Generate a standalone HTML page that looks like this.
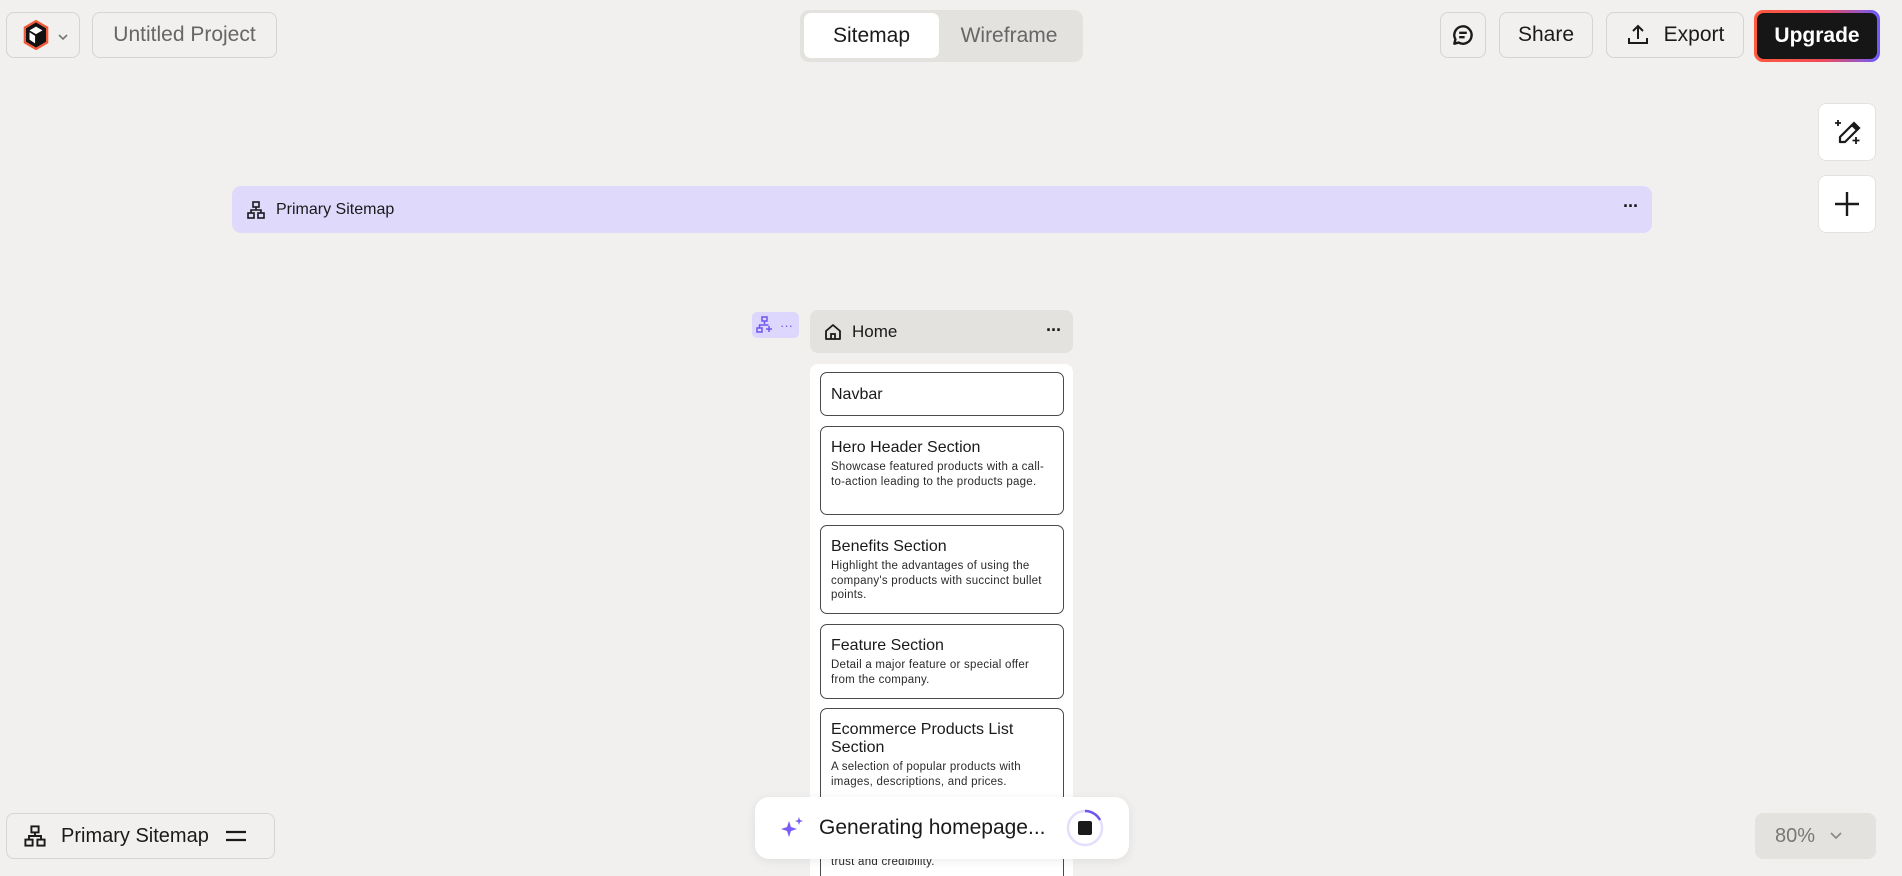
<!DOCTYPE html>
<html style="height:876px;overflow:hidden"><head><meta charset="utf-8"><style>
*{box-sizing:border-box;margin:0;padding:0}
body{width:1902px;height:876px;background:#f1f0ee;font-family:"Liberation Sans",sans-serif;color:#1a1a1a;position:relative;overflow:hidden}
.a{position:absolute}
.btn{position:absolute;border:1px solid #d6d4d0;border-radius:8px;display:flex;align-items:center;justify-content:center;font-size:21px;color:#1a1a1a}
.card{position:absolute;left:820px;width:244px;background:#fff;border:1.3px solid #4a4a4a;border-radius:7px;padding:10px 10px 0 10px}
.card h4{font-weight:normal;font-size:16px;line-height:18px;margin-top:1px}
.card p{font-size:11.5px;letter-spacing:0.25px;line-height:14.5px;color:#2a2a2a;margin-top:3px}
</style></head><body>
<div class="btn" style="left:6px;top:12px;width:74px;height:46px">
<svg width="26" height="30" viewBox="0 0 28 32" style="margin-left:-14px"><polygon points="14,1 26,8 26,24 14,31 2,24 2,8" fill="#111" stroke="#f15a3b" stroke-width="2.5"/><polygon points="14,7 21,11 14,15 7,11" fill="#fff"/><polygon points="7,13 13,17 13,25 7,21" fill="#fff"/></svg>
<svg width="12" height="8" viewBox="0 0 12 8" style="position:absolute;right:10px;top:20px"><path d="M2 2l4 4 4-4" stroke="#777" stroke-width="1.6" fill="none"/></svg>
</div>
<div class="btn" style="left:92px;top:12px;width:185px;height:46px;color:#666">Untitled Project</div>
<div class="a" style="left:800px;top:10px;width:283px;height:52px;background:#e3e2de;border-radius:9px"></div>
<div class="a" style="left:804px;top:13px;width:135px;height:45px;background:#fff;border-radius:7px;display:flex;align-items:center;justify-content:center;font-size:21px">Sitemap</div>
<div class="a" style="left:939px;top:13px;width:140px;height:45px;display:flex;align-items:center;justify-content:center;font-size:21px;color:#666">Wireframe</div>
<div class="btn" style="left:1440px;top:12px;width:46px;height:46px"><svg width="26" height="26" viewBox="0 0 24 24" fill="none" stroke="#1a1a1a" stroke-width="2.2"><path d="M4 20l1-4a8 8 0 1 1 3 3z" stroke-linejoin="round"/><path d="M8.5 10h7M8.5 14h5"/></svg></div>
<div class="btn" style="left:1499px;top:12px;width:94px;height:46px">Share</div>
<div class="btn" style="left:1606px;top:12px;width:138px;height:46px"><svg width="24" height="24" viewBox="0 0 24 24" fill="none" stroke="#1a1a1a" stroke-width="2" style="margin-right:14px"><path d="M12 16V3M7 8l5-5 5 5M3 15v5h18v-5"/></svg>Export</div>
<div class="a" style="left:1754px;top:10px;width:126px;height:52px;border-radius:9px;background:linear-gradient(90deg,#ff5a3c,#f04a5a 55%,#6a5cff)"></div>
<div class="a" style="left:1757px;top:13px;width:120px;height:46px;border-radius:7px;background:#161616;color:#fff;font-size:21px;font-weight:bold;display:flex;align-items:center;justify-content:center">Upgrade</div>
<div class="btn" style="left:1818px;top:103px;width:58px;height:58px;background:#fff;border-color:#e4e2de"><svg width="32" height="32" viewBox="0 0 32 32" fill="none" stroke="#1a1a1a" stroke-width="2.2"><path d="M9 26l0-5 12-12 5 5-12 12z" stroke-linejoin="round"/><path d="M21 9l2-2 5 5-2 2" fill="#1a1a1a"/><path d="M7 4v6M4 7h6M25 21v7M21.5 24.5h7" stroke-width="1.8"/></svg></div>
<div class="btn" style="left:1818px;top:175px;width:58px;height:58px;background:#fff;border-color:#e4e2de"><svg width="28" height="28" viewBox="0 0 28 28" stroke="#1a1a1a" stroke-width="2.4"><path d="M14 2v24M2 14h24"/></svg></div>
<div class="a" style="left:232px;top:186px;width:1420px;height:47px;background:#dfd9fc;border-radius:9px;display:flex;align-items:center;padding-left:14px;font-size:16px">
<svg width="20" height="20" viewBox="0 0 20 20" fill="none" stroke="#1a1a1a" stroke-width="1.6" style="margin-right:10px"><rect x="7" y="2" width="6" height="5"/><rect x="2" y="13" width="6" height="5"/><rect x="12" y="13" width="6" height="5"/><path d="M10 7v3M5 13v-3h10v3"/></svg>Primary Sitemap
<span style="position:absolute;right:14px;top:10px;font-size:18px;letter-spacing:-1px;font-weight:bold">···</span></div>
<div class="a" style="left:752px;top:312px;width:47px;height:26px;background:#ddd7fd;border-radius:5px;color:#6c56f0;font-size:13px;display:flex;align-items:center;padding-left:4px">
<svg width="18" height="18" viewBox="0 0 18 18" fill="none" stroke="#6c56f0" stroke-width="1.5"><rect x="6" y="1" width="5" height="4"/><rect x="1" y="12" width="5" height="4"/><path d="M8.5 5v3M3.5 12V9h9M13 10v6M10 13h6"/></svg><span style="margin-left:6px">···</span></div>
<div class="a" style="left:810px;top:310px;width:263px;height:43px;background:#e3e2de;border-radius:8px;display:flex;align-items:center;padding-left:13px;font-size:17px">
<svg width="20" height="20" viewBox="0 0 20 20" fill="none" stroke="#1a1a1a" stroke-width="1.8" style="margin-right:9px"><path d="M3 9l7-6 7 6v8H3z" stroke-linejoin="round"/><path d="M8 17v-5h4v5"/></svg>Home
<span style="position:absolute;right:12px;top:10px;font-size:18px;letter-spacing:-1px;font-weight:bold">···</span></div>
<div class="a" style="left:810px;top:364px;width:263px;height:512px;background:#fff;border-radius:8px 8px 0 0"></div>
<div class="card" style="top:372px;height:44px;padding-top:12px"><h4>Navbar</h4></div>
<div class="card" style="top:426px;height:89px"><h4 style="margin-top:2px">Hero Header Section</h4><p>Showcase featured products with a call-to-action leading to the products page.</p></div>
<div class="card" style="top:525px;height:89px"><h4 style="margin-top:2px">Benefits Section</h4><p>Highlight the advantages of using the company's products with succinct bullet points.</p></div>
<div class="card" style="top:624px;height:75px"><h4 style="margin-top:2px">Feature Section</h4><p>Detail a major feature or special offer from the company.</p></div>
<div class="card" style="top:708px;height:110px"><h4 style="margin-top:2px">Ecommerce Products List Section</h4><p>A selection of popular products with images, descriptions, and prices.</p></div>
<div class="card" style="top:826px;height:50px;padding-top:25px;border-bottom:none;border-radius:7px 7px 0 0"><p>trust and credibility.</p></div>
<div class="a" style="left:755px;top:797px;width:374px;height:62px;background:#fff;border-radius:14px;box-shadow:0 2px 10px rgba(0,0,0,.08);display:flex;align-items:center;padding-left:24px;font-size:21px">
<svg width="26" height="26" viewBox="0 0 26 26" fill="#7b5cf5" style="margin-right:14px"><path d="M10 6l2 6 6 2-6 2-2 6-2-6-6-2 6-2z"/><path d="M20 2l1 3 3 1-3 1-1 3-1-3-3-1 3-1z"/></svg>Generating homepage...
<svg width="40" height="40" viewBox="0 0 40 40" style="position:absolute;right:24px;top:11px"><circle cx="20" cy="20" r="17" fill="none" stroke="#e4defd" stroke-width="2.5"/><path d="M20 3a17 17 0 0 1 15 9" fill="none" stroke="#6c56f0" stroke-width="2.5"/><rect x="13" y="13" width="14" height="14" rx="2" fill="#1a1a1a"/></svg></div>
<div class="btn" style="left:6px;top:813px;width:269px;height:46px;justify-content:flex-start;padding-left:16px;font-size:20px">
<svg width="24" height="24" viewBox="0 0 20 20" fill="none" stroke="#1a1a1a" stroke-width="1.6" style="margin-right:14px"><rect x="7" y="2" width="6" height="5"/><rect x="2" y="13" width="6" height="5"/><rect x="12" y="13" width="6" height="5"/><path d="M10 7v3M5 13v-3h10v3"/></svg>Primary Sitemap
<svg width="22" height="12" viewBox="0 0 22 12" stroke="#1a1a1a" stroke-width="2.2" style="margin-left:16px"><path d="M1 2h20M1 10h20"/></svg></div>
<div class="a" style="left:1755px;top:813px;width:121px;height:46px;background:#e3e2de;border-radius:8px;display:flex;align-items:center;padding-left:20px;font-size:20px;color:#777">80%
<svg width="14" height="10" viewBox="0 0 14 10" style="margin-left:14px"><path d="M2 2l5 5 5-5" stroke="#888" stroke-width="1.6" fill="none"/></svg></div>
</body></html>
